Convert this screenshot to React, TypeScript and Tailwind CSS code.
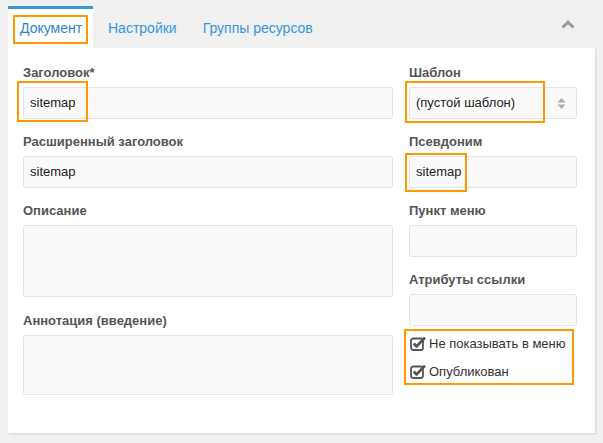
import type { ReactNode } from "react"

const font = { fontFamily: '"Liberation Sans", Arial, sans-serif' }

function Mark({ className }: { className: string }) {
  return <div className={`pointer-events-none absolute border-2 border-[#f90] ${className}`} />
}

function Field({
  label,
  value,
  h = "h-[32px]",
  mb = "mb-[13px]",
  mark,
}: {
  label: string
  value?: ReactNode
  h?: string
  mb?: string
  mark?: ReactNode
}) {
  return (
    <div className={mb}>
      <div className="h-[20px] leading-[20px] text-[13px] font-bold text-[#555] mb-[4px]">{label}</div>
      <div className="relative">
        <div
          className={`${h} rounded-[3px] border border-[#e3e3e3] bg-[#fafafa] px-[6px] text-[13px] text-[#222] leading-[30px]`}
        >
          {value}
        </div>
        {mark}
      </div>
    </div>
  )
}

function CheckIcon() {
  return (
    <svg width="17" height="15" viewBox="0 0 17 15" className="shrink-0">
      <rect x="1" y="2.5" width="12" height="11.5" rx="2.2" fill="none" stroke="#555" strokeWidth="1.8" />
      <path d="M3.8 7.6 L6.6 10.4 L15 1.6" fill="none" stroke="#555" strokeWidth="2.8" strokeLinejoin="round" />
    </svg>
  )
}

export default function App() {
  return (
    <div style={font} className="w-[603px] h-[443px] bg-[#f0f0f0] overflow-hidden">
      <div className="flex items-end h-[48px] pl-[8px] pr-[10px]">
        <div className="relative h-[42px] w-[85px] bg-white border-t-[3px] border-[#3a97d6] flex items-center pl-[12px] text-[14px] text-[#2f86c4]">
          Документ
          <Mark className="left-[5px] top-[6px] w-[75px] h-[29px]" />
        </div>
        <div className="h-[42px] flex items-center pt-[3px] pl-[15px] text-[14px] text-[#3498db]">Настройки</div>
        <div className="h-[42px] flex items-center pt-[3px] pl-[26px] text-[14px] text-[#3498db]">Группы ресурсов</div>
        <div className="flex-1" />
        <div className="h-[42px] flex items-center pr-[18px] pb-[6px]">
          <svg width="14" height="9" viewBox="0 0 14 9">
            <path d="M1.5 7.5 L7 2.2 L12.5 7.5" fill="none" stroke="#999" strokeWidth="3" />
          </svg>
        </div>
      </div>
      <div className="mx-[8px] h-[385px] bg-white shadow-[1px_1px_2px_rgba(0,0,0,0.12)] flex gap-[16px] pl-[15px] pr-[16px] pt-[15px]">
        <div className="w-[370px]">
          <Field
            label="Заголовок*"
            value="sitemap"
            mark={<Mark className="left-[-6px] top-[-6px] w-[71px] h-[41px]" />}
          />
          <Field label="Расширенный заголовок" value="sitemap" />
          <Field label="Описание" h="h-[72px]" mb="mb-[14px]" />
          <Field label="Аннотация (введение)" h="h-[60px]" />
        </div>
        <div className="w-[168px]">
          <Field
            label="Шаблон"
            mark={<Mark className="left-[-4px] top-[-6px] w-[140px] h-[42px]" />}
            value={
              <div className="flex items-center justify-between">
                <span>(пустой шаблон)</span>
                <svg width="9" height="13" viewBox="0 0 9 13" className="mr-[4px]">
                  <path d="M4.5 1 L8.5 5.5 L0.5 5.5 Z M4.5 12 L8.5 7.5 L0.5 7.5 Z" fill="#aaa" />
                </svg>
              </div>
            }
          />
          <Field
            label="Псевдоним"
            value="sitemap"
            mark={<Mark className="left-[-4px] top-[-3px] w-[62px] h-[39px]" />}
          />
          <Field label="Пункт меню" />
          <Field label="Атрибуты ссылки" mb="mb-[3px]" />
          <div className="ml-[-5px] w-[170px] h-[56px] border-2 border-[#f90] pl-[4px] pt-[5px] flex flex-col gap-[13px] text-[13px] text-[#333]">
            <div className="flex items-center gap-[2px] h-[15px]">
              <CheckIcon />
              Не показывать в меню
            </div>
            <div className="flex items-center gap-[2px] h-[15px]">
              <CheckIcon />
              Опубликован
            </div>
          </div>
        </div>
      </div>
    </div>
  )
}
